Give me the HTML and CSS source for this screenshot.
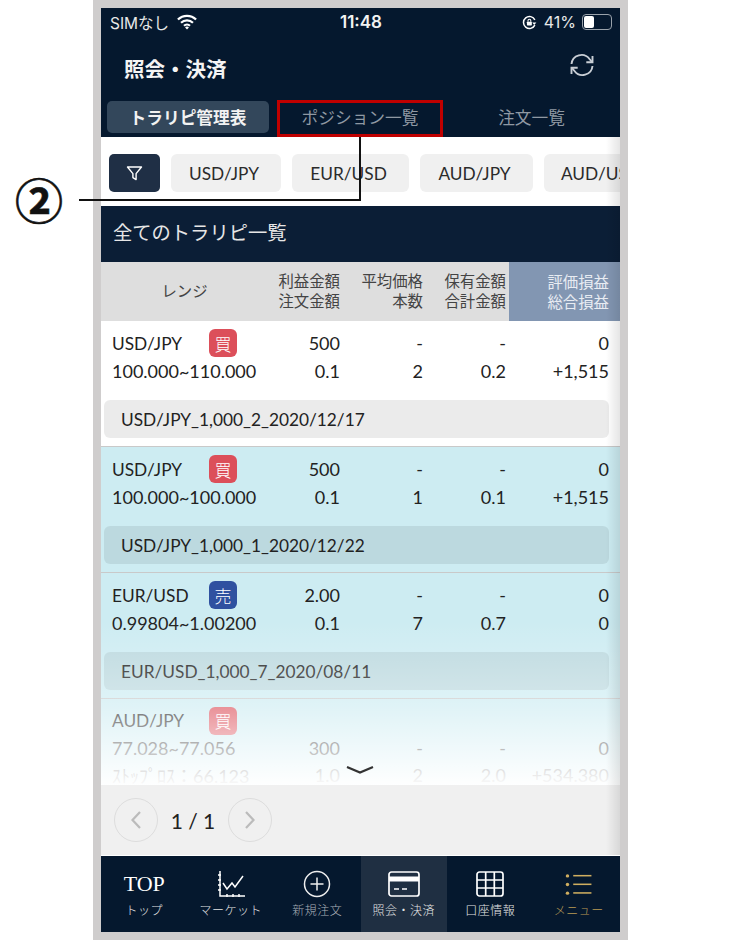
FILE: index.html
```html
<!DOCTYPE html>
<html lang="ja">
<head>
  <meta charset="UTF-8">
  <title>照会・決済</title>
  <link rel="stylesheet" href="styles.css">
</head>
<body>

  <div class="frame">
    <div class="phone">

      <!-- Status bar -->
      <div class="status-bar">
        <div class="status-left">
          <span>SIMなし</span>
          <svg class="wifi" width="22" height="16" viewBox="0 0 20 15"><path d="M1.5 5.2a12 12 0 0 1 17 0M4.4 8.2a8 8 0 0 1 11.2 0M7.2 11a4 4 0 0 1 5.6 0" fill="none" stroke="#fff" stroke-width="2.1"/><path d="M10 14.6l-1.8-2a2.6 2.6 0 0 1 3.6 0z" fill="#fff"/></svg>
        </div>
        <div class="status-time">11:48</div>
        <div class="status-right">
          <svg width="15" height="15" viewBox="0 0 14 14"><path d="M12 9.5A5.6 5.6 0 1 1 12 4.5" fill="none" stroke="#fff" stroke-width="1.4"/><path d="M13.4 7l-2 2.4L9.6 7z" fill="#fff"/><rect x="4.6" y="6.2" width="4.6" height="3.6" rx=".6" fill="#fff"/><path d="M5.6 6.2V5.2a1.3 1.3 0 0 1 2.6 0v1" fill="none" stroke="#fff"/></svg>
          <span>41%</span>
          <div class="battery"><div class="battery-level"></div></div>
        </div>
      </div>

      <!-- Title -->
      <div class="title-bar">
        <h1>照会・決済</h1>
        <svg width="26" height="24" viewBox="0 0 26 24" fill="none" stroke="#c9ced5" stroke-width="1.9"><path d="M2.5 11A10 10 0 0 1 20.5 6L23 9"/><path d="M23.5 3v6.2h-6.2"/><path d="M23.5 13A10 10 0 0 1 5.5 18L3 15"/><path d="M2.5 21v-6.2h6.2"/></svg>
      </div>

      <!-- Tabs -->
      <div class="tabs">
        <div class="tab tab-active">トラリピ管理表</div>
        <div class="tab tab-position">ポジション一覧</div>
        <div class="tab tab-order">注文一覧</div>
      </div>

      <!-- Pair filter -->
      <div class="filter-row">
        <button class="filter-btn">
          <svg width="17" height="17" viewBox="0 0 17 17"><path d="M1.5 2h14l-5.4 6.6v6l-3.2-2V8.6z" fill="none" stroke="#fff" stroke-width="1.4" stroke-linejoin="round"/></svg>
        </button>
        <div class="chip chip-usdjpy">USD/JPY</div>
        <div class="chip chip-eurusd">EUR/USD</div>
        <div class="chip chip-audjpy">AUD/JPY</div>
        <div class="chip chip-audusd">AUD/USD</div>
      </div>

      <div class="section-title">全てのトラリピ一覧</div>

      <!-- Table header -->
      <div class="table-head">
        <div class="head-range">レンジ</div>
        <div class="head-cell">利益金額<br>注文金額</div>
        <div class="head-cell">平均価格<br>本数</div>
        <div class="head-cell">保有金額<br>合計金額</div>
        <div class="head-cell head-sort">評価損益<br>総合損益</div>
      </div>

      <!-- Rows -->
      <div class="table-body">
        <div class="row">
          <div class="row-grid">
            <div class="pair"><span class="pair-name">USD/JPY</span><span class="badge badge-buy">買</span></div>
            <div class="num">500</div><div class="num">-</div><div class="num">-</div><div class="num num-last">0</div>
            <div class="range">100.000~110.000</div>
            <div class="num">0.1</div><div class="num">2</div><div class="num">0.2</div><div class="num num-last">+1,515</div>
          </div>
          <div class="row-name">USD/JPY_1,000_2_2020/12/17</div>
        </div>

        <div class="row row-active">
          <div class="row-grid">
            <div class="pair"><span class="pair-name">USD/JPY</span><span class="badge badge-buy">買</span></div>
            <div class="num">500</div><div class="num">-</div><div class="num">-</div><div class="num num-last">0</div>
            <div class="range">100.000~100.000</div>
            <div class="num">0.1</div><div class="num">1</div><div class="num">0.1</div><div class="num num-last">+1,515</div>
          </div>
          <div class="row-name">USD/JPY_1,000_1_2020/12/22</div>
        </div>

        <div class="row row-active">
          <div class="row-grid">
            <div class="pair"><span class="pair-name">EUR/USD</span><span class="badge badge-sell">売</span></div>
            <div class="num">2.00</div><div class="num">-</div><div class="num">-</div><div class="num num-last">0</div>
            <div class="range">0.99804~1.00200</div>
            <div class="num">0.1</div><div class="num">7</div><div class="num">0.7</div><div class="num num-last">0</div>
          </div>
          <div class="row-name">EUR/USD_1,000_7_2020/08/11</div>
        </div>

        <div class="row row-active">
          <div class="row-grid row-grid-stop">
            <div class="pair"><span class="pair-name">AUD/JPY</span><span class="badge badge-buy">買</span></div>
            <div></div><div></div><div></div><div></div>
            <div class="range">77.028~77.056</div>
            <div class="num">300</div><div class="num">-</div><div class="num">-</div><div class="num num-last">0</div>
            <div class="range">ｽﾄｯﾌﾟﾛｽ：66.123</div>
            <div class="num">1.0</div><div class="num">2</div><div class="num">2.0</div><div class="num num-last">+534.380</div>
          </div>
        </div>

        <div class="fade"></div>
        <svg class="more" width="30" height="12" viewBox="0 0 30 12"><path d="M2 2l13 5.5L28 2" fill="none" stroke="#333" stroke-width="2.2"/></svg>
      </div>

      <!-- Pager -->
      <div class="pager">
        <div class="page-btn"><svg width="12" height="20" viewBox="0 0 12 20"><path d="M10 2L2.5 10l7.5 8" fill="none" stroke="#bbb" stroke-width="2.2"/></svg></div>
        <div class="page-num">1 / 1</div>
        <div class="page-btn"><svg width="12" height="20" viewBox="0 0 12 20"><path d="M2 2l7.5 8L2 18" fill="none" stroke="#bbb" stroke-width="2.2"/></svg></div>
      </div>

      <!-- Bottom menu -->
      <div class="nav">
        <div class="nav-item">
          <div class="nav-icon nav-top">TOP</div>
          <div class="nav-label">トップ</div>
        </div>
        <div class="nav-item">
          <div class="nav-icon">
            <svg width="28" height="28" viewBox="0 0 28 28" fill="none" stroke="#fff" stroke-width="1.5"><path d="M3 1v25h25"/><path d="M1 5h3M1 10h3M1 15h3M1 20h3M10 24v3M16 24v3M22 24v3"/><path d="M6 13l4 6 5-6 3 4 8-11"/></svg>
          </div>
          <div class="nav-label">マーケット</div>
        </div>
        <div class="nav-item nav-dim">
          <div class="nav-icon">
            <svg width="28" height="28" viewBox="0 0 28 28" fill="none" stroke="#eee" stroke-width="1.5"><circle cx="14" cy="14" r="12.5"/><path d="M14 7.5v13M7.5 14h13"/></svg>
          </div>
          <div class="nav-label">新規注文</div>
        </div>
        <div class="nav-item nav-current">
          <div class="nav-icon">
            <svg width="32" height="26" viewBox="0 0 32 26"><rect x="1" y="1" width="30" height="24" rx="2.5" fill="none" stroke="#fff" stroke-width="1.7"/><rect x="1" y="5.5" width="30" height="5" fill="#fff"/><path d="M6 18h5M14 18h5" stroke="#fff" stroke-width="1.6"/></svg>
          </div>
          <div class="nav-label">照会・決済</div>
        </div>
        <div class="nav-item">
          <div class="nav-icon">
            <svg width="28" height="26" viewBox="0 0 28 26" fill="none" stroke="#fff" stroke-width="1.7"><rect x="1" y="1" width="26" height="24" rx="2.5"/><path d="M1 9h26M1 17h26M9.7 1v24M18.3 1v24"/></svg>
          </div>
          <div class="nav-label">口座情報</div>
        </div>
        <div class="nav-item nav-menu">
          <div class="nav-icon">
            <svg width="27" height="23" viewBox="0 0 27 24" fill="#d0ae60"><circle cx="2" cy="3" r="1.8"/><circle cx="2" cy="12" r="1.8"/><circle cx="2" cy="21" r="1.8"/><rect x="8" y="2" width="19" height="1.6"/><rect x="8" y="11" width="19" height="1.6"/><rect x="8" y="20" width="19" height="1.6"/></svg>
          </div>
          <div class="nav-label">メニュー</div>
        </div>
      </div>

      <div class="edge-shadow"></div>
    </div>
  </div>

  <!-- Annotation over the screenshot -->
  <div class="mark-box"></div>
  <div class="mark-line-v"></div>
  <div class="mark-line-h"></div>
  <div class="mark-num">②</div>

</body>
</html>
```

FILE: styles.css
```css
/* Global Styles */
html, body {
  margin: 0;
  padding: 0;
  height: 940px;
  overflow: hidden;
}

body {
  background-color: #fff;
  font-family: 'Lato', 'Noto Sans CJK JP', sans-serif;
  color: #222;
  position: relative;
}

.frame {
  width: 519px;
  height: 924px;
  margin-left: 93px;
  padding: 8px;
  background-color: #cfcdcd;
}

.phone {
  width: 519px;
  height: 924px;
  position: relative;
  overflow: hidden;
  background-color: #fff;
}

/* Status bar */
.status-bar {
  height: 28px;
  background-color: #05182e;
  color: #e8e8e8;
  display: grid;
  grid-template-columns: 1fr auto 1fr;
  align-items: center;
  padding: 0 8px 0 9px;
  font-family: 'Inter', 'Noto Sans CJK JP', sans-serif;
  font-size: 15.5px;
}

.status-left {
  display: flex;
  align-items: center;
  gap: 7px;
}

.status-time {
  font-size: 17px;
  font-weight: 600;
  color: #f2f2f2;
}

.status-right {
  display: flex;
  justify-content: flex-end;
  align-items: center;
  gap: 6px;
}

.status-right span {
  margin-left: 1px;
  font-size: 16px;
}

.battery {
  width: 26px;
  height: 12px;
  border: 1px solid #9aa2ab;
  border-radius: 4px;
  padding: 1px;
}

.battery-level {
  width: 10px;
  height: 100%;
  background-color: #fff;
  border-radius: 2px;
}

/* Title */
.title-bar {
  height: 65px;
  background-color: #05182e;
  display: flex;
  justify-content: space-between;
  align-items: center;
  padding: 0 25px 2px 23px;
  box-sizing: border-box;
}

.title-bar h1 {
  margin: 0;
  font-family: 'Noto Sans CJK JP', sans-serif;
  font-size: 20.5px;
  font-weight: 700;
  color: #f4f4f4;
}

.title-bar svg {
  margin-bottom: 6px;
}

/* Tabs */
.tabs {
  height: 36px;
  background-color: #05182e;
  display: flex;
  padding-left: 6px;
  font-family: 'Noto Sans CJK JP', sans-serif;
  font-size: 16.7px;
  color: #8f98a3;
}

.tab {
  height: 32px;
  display: flex;
  justify-content: center;
  align-items: center;
}

.tab-active {
  width: 162px;
  background-color: #33475b;
  border-radius: 5px;
  color: #f2f2f2;
  font-weight: 700;
}

.tab-position {
  width: 166px;
  margin-left: 8px;
}

.tab-order {
  flex: 1;
}

/* Pair filter */
.filter-row {
  height: 69px;
  display: flex;
  align-items: center;
  gap: 11px;
  padding: 3px 0 0 8px;
  overflow: hidden;
  box-sizing: border-box;
}

.filter-btn {
  flex: none;
  width: 51px;
  height: 38px;
  background-color: #1f2f45;
  border: none;
  border-radius: 5px;
  padding: 0;
  display: flex;
  justify-content: center;
  align-items: center;
}

.chip {
  flex: none;
  height: 38px;
  box-sizing: border-box;
  padding-right: 4px;
  background-color: #f0f0f0;
  border-radius: 6px;
  display: flex;
  justify-content: center;
  align-items: center;
  font-size: 17.3px;
  color: #2b2b2b;
}

.chip-usdjpy { width: 110px; }
.chip-eurusd { width: 117px; }
.chip-audjpy { width: 113px; }
.chip-audusd { width: 118px; }

/* Section title */
.section-title {
  height: 56px;
  background-color: #0b1e36;
  color: #e6e6e6;
  display: flex;
  align-items: center;
  padding: 0 0 5px 12px;
  box-sizing: border-box;
  font-family: 'Noto Sans CJK JP', sans-serif;
  font-size: 19.3px;
}

/* Table */
.table-head {
  height: 59px;
  display: grid;
  grid-template-columns: 160px 79px 83px 83px 114px;
  background-color: #dedede;
  font-family: 'Noto Sans CJK JP', sans-serif;
  font-size: 15.4px;
  line-height: 20px;
  color: #444;
}

.head-range {
  display: flex;
  align-items: center;
  justify-content: center;
  padding: 0 0 4px 7px;
}

.head-cell {
  text-align: right;
  padding-bottom: 4px;
  align-self: center;
}

.head-sort {
  align-self: stretch;
  margin-left: 3px;
  padding: 9px 11px 0 0;
  background-color: #8296b2;
  color: #e8ecf2;
}

.table-body {
  height: 464px;
  position: relative;
  overflow: hidden;
}

.row {
  height: 126px;
  box-sizing: border-box;
  padding-top: 8px;
  border-bottom: 1px solid #c9c9c9;
  background-color: #fff;
}

.row-active {
  background-color: #cdecf2;
}

.row-grid {
  display: grid;
  grid-template-columns: 160px 79px 83px 83px 114px;
  grid-auto-rows: 28px;
  align-items: center;
  font-size: 18px;
}

.row-grid-stop {
  grid-auto-rows: 27px;
}

.pair {
  display: flex;
  align-items: center;
  padding-left: 11px;
  font-size: 17.3px;
}

.pair-name {
  width: 97px;
}

.range {
  padding-left: 11px;
  white-space: nowrap;
}

.num {
  text-align: right;
}

.num-last {
  padding-right: 11px;
}

.badge {
  width: 28px;
  height: 28px;
  border-radius: 6px;
  display: flex;
  justify-content: center;
  align-items: center;
  color: #fff;
  font-family: 'Noto Sans CJK JP', sans-serif;
  font-size: 17px;
  font-weight: 300;
}

.badge-buy {
  background-color: #dc4f5a;
}

.badge-sell {
  background-color: #2f51a0;
}

.row-name {
  width: 505px;
  height: 38px;
  margin: 15px 0 0 3px;
  box-sizing: border-box;
  padding-left: 17px;
  display: flex;
  align-items: center;
  background-color: rgba(0, 0, 0, 0.08);
  border-radius: 6px;
  font-size: 17.3px;
}

.fade {
  position: absolute;
  left: 0;
  right: 0;
  top: 300px;
  bottom: 0;
  background: linear-gradient(rgba(255, 255, 255, 0), rgba(255, 255, 255, 0.35) 50%, rgba(255, 255, 255, 0.98));
}

.more {
  position: absolute;
  left: 244px;
  top: 444px;
}

/* Pager */
.pager {
  height: 71px;
  background-color: #f0f0f0;
  display: flex;
  align-items: center;
  padding-left: 13px;
  border-bottom: 1px solid #fff;
  box-sizing: border-box;
}

.page-btn {
  width: 42px;
  height: 42px;
  border: 1px solid #ddd;
  border-radius: 50%;
  display: flex;
  justify-content: center;
  align-items: center;
}

.page-num {
  font-size: 21px;
  color: #222;
  width: 70px;
  text-align: center;
  white-space: nowrap;
}

/* Bottom menu */
.nav {
  height: 76px;
  background-color: #05182e;
  display: grid;
  grid-template-columns: repeat(6, 1fr);
  font-family: 'Noto Sans CJK JP', sans-serif;
  color: #e4e4e4;
}

.nav-item {
  display: flex;
  flex-direction: column;
  align-items: center;
  padding-top: 13px;
  box-sizing: border-box;
}

.nav-icon {
  height: 30px;
  display: flex;
  align-items: center;
  justify-content: center;
}

.nav-top {
  font-family: 'Liberation Serif', serif;
  font-size: 22px;
  color: #fff;
}

.nav-label {
  margin-top: 2px;
  font-size: 12px;
  line-height: 18px;
  letter-spacing: 0.5px;
  font-weight: 300;
}

.nav-dim .nav-label {
  color: #aab0b8;
}

.nav-current {
  background-color: #1f2f42;
}

.nav-menu {
  padding-left: 4px;
}

.nav-menu .nav-label {
  color: #b89a55;
}

.edge-shadow {
  position: absolute;
  top: 129px;
  right: 0;
  bottom: 77px;
  width: 14px;
  background: linear-gradient(to right, rgba(0, 0, 0, 0), rgba(0, 0, 0, 0.1));
}

/* Annotation */
.mark-box {
  position: absolute;
  left: 277px;
  top: 100px;
  width: 160px;
  height: 31px;
  border: 3px solid #c00000;
}

.mark-line-v {
  position: absolute;
  left: 359px;
  top: 137px;
  width: 2px;
  height: 64px;
  background-color: #111;
}

.mark-line-h {
  position: absolute;
  left: 79px;
  top: 199px;
  width: 282px;
  height: 2px;
  background-color: #111;
}

.mark-num {
  position: absolute;
  left: 15px;
  top: 163px;
  font-family: 'Noto Sans CJK JP', sans-serif;
  font-size: 48px;
  line-height: 70px;
  font-weight: 700;
  color: #111;
  -webkit-text-stroke: 0.6px #111;
}
```
